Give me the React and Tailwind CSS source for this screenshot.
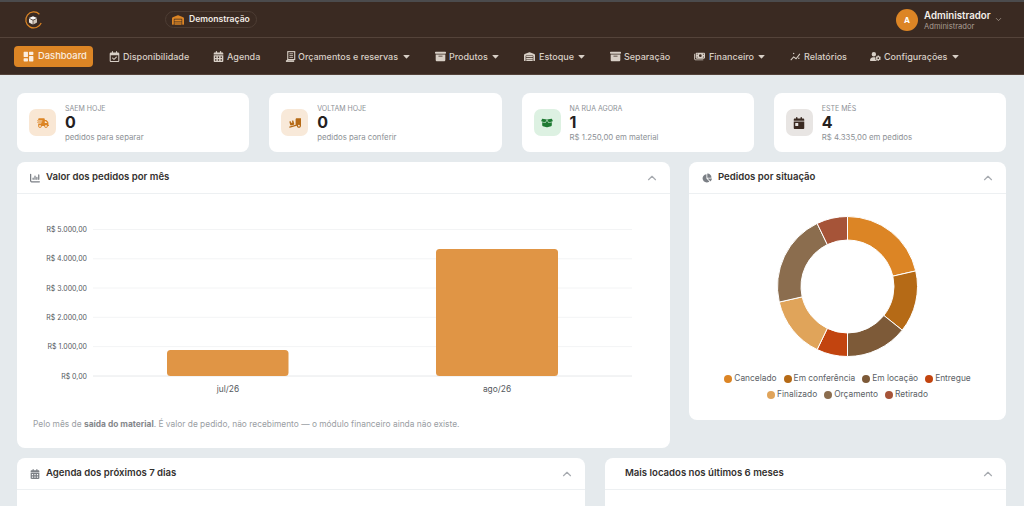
import React from 'react';
import { PiCaretDownFill } from 'react-icons/pi';
import { RiDashboardFill } from 'react-icons/ri';
import { FaRegCalendarCheck, FaCalendarDays, FaBoxArchive, FaMoneyBills, FaUserGear, FaTruckFast, FaTruckRampBox, FaBoxOpen, FaCalendarDay, FaWarehouse, FaChartPie, FaChartColumn } from 'react-icons/fa6';
import { LuChevronUp, LuChevronDown } from 'react-icons/lu';

const BudgetIcon = ({ size }) => (
    <svg width={size} height={size} viewBox="0 0 12 12" fill="none" stroke="currentColor">
        <rect x="3" y="0.7" width="7.6" height="8.6" strokeWidth="1.2" />
        <path d="M4.8 3h4M4.8 5h4M4.8 7h4" strokeWidth="0.9" />
        <path d="M1 11h9" strokeWidth="1.8" />
        <path d="M2.6 9.5V11" strokeWidth="1.2" />
    </svg>
);

const ReportIcon = ({ size }) => (
    <svg width={size} height={size} viewBox="0 0 12 12" fill="none" stroke="currentColor">
        <path d="M0.8 10 L4 6.4 L6.6 8.4 L10.8 3.2" strokeWidth="1.1" />
        <circle cx="4" cy="2.8" r="0.8" fill="currentColor" stroke="none" />
        <circle cx="9.6" cy="8" r="0.8" fill="currentColor" stroke="none" />
    </svg>
);

const navItems = [
    { label: 'Disponibilidade', icon: FaRegCalendarCheck, gap: 'ml-[3px]', w: 'w-[67px]', ml: 'ml-[15px]' },
    { label: 'Agenda', icon: FaCalendarDays, gap: 'ml-[3px]', w: 'w-[35px]', ml: 'ml-[22px]' },
    { label: 'Orçamentos e reservas', icon: BudgetIcon, gap: 'ml-[2px]', w: 'w-[100px]', ml: 'ml-[22px]', caret: true },
    { label: 'Produtos', icon: FaBoxArchive, gap: 'ml-[3px]', w: 'w-[38px]', ml: 'ml-[23px]', caret: true },
    { label: 'Estoque', icon: FaWarehouse, gap: 'ml-[4px]', w: 'w-[34px]', ml: 'ml-[23px]', caret: true },
    { label: 'Separação', icon: FaBoxArchive, gap: 'ml-[3px]', w: 'w-[47px]', ml: 'ml-[23px]' },
    { label: 'Financeiro', icon: FaMoneyBills, gap: 'ml-[4px]', w: 'w-[44px]', ml: 'ml-[22px]', caret: true },
    { label: 'Relatórios', icon: ReportIcon, gap: 'ml-[3px]', w: 'w-[43px]', ml: 'ml-[23px]' },
    { label: 'Configurações', icon: FaUserGear, gap: 'ml-[3px]', w: 'w-[63px]', ml: 'ml-[22px]', caret: true },
];

const stats = [
    { label: 'SAEM HOJE', value: '0', sub: 'pedidos para separar', icon: FaTruckFast, box: 'bg-[#f9e7d4]', color: 'text-[#dc8525]' },
    { label: 'VOLTAM HOJE', value: '0', sub: 'pedidos para conferir', icon: FaTruckRampBox, box: 'bg-[#f8e9d9]', color: 'text-[#b56a16]' },
    { label: 'NA RUA AGORA', value: '1', sub: 'R$ 1.250,00 em material', icon: FaBoxOpen, box: 'bg-[#ddf1e2]', color: 'text-[#1f7a33]' },
    { label: 'ESTE MÊS', value: '4', sub: 'R$ 4.335,00 em pedidos', icon: FaCalendarDay, box: 'bg-[#e8e5e3]', color: 'text-[#3a2a22]' },
];

const donut = [
    { label: 'Cancelado', n: 3, color: '#dc8525', dot: 'bg-[#dc8525]' },
    { label: 'Em conferência', n: 2, color: '#b56a16', dot: 'bg-[#b56a16]' },
    { label: 'Em locação', n: 2, color: '#7d5a38', dot: 'bg-[#7d5a38]' },
    { label: 'Entregue', n: 1, color: '#c2440f', dot: 'bg-[#c2440f]' },
    { label: 'Finalizado', n: 2, color: '#e0a45a', dot: 'bg-[#e0a45a]' },
    { label: 'Orçamento', n: 3, color: '#8b6d4e', dot: 'bg-[#8b6d4e]' },
    { label: 'Retirado', n: 1, color: '#a65438', dot: 'bg-[#a65438]' },
];

const arcPath = (start, end) => {
    const c = 70.5, R = 70, r = 46.5;
    const pt = (rad, a) => {
        const t = (a / 14) * Math.PI * 2;
        return `${(c + rad * Math.sin(t)).toFixed(2)} ${(c - rad * Math.cos(t)).toFixed(2)}`;
    };
    const large = (end - start) / 14 > 0.5 ? 1 : 0;
    return `M${pt(R, start)} A${R} ${R} 0 ${large} 1 ${pt(R, end)} L${pt(r, end)} A${r} ${r} 0 ${large} 0 ${pt(r, start)} Z`;
};

const Logo = () => (
    <svg width="20" height="20" viewBox="0 0 20 20" className="ml-[23px]">
        <path d="M16.4 4.2 A8 8 0 1 0 18.2 13" fill="none" stroke="#dc8525" strokeWidth="1.2" />
        <path d="M10 6.2 L14 8 L10 9.8 L6 8 Z" fill="#ffffff" />
        <path d="M6 8.6 L9.7 10.4 L9.7 14.4 L6 12.6 Z" fill="#efe9e2" />
        <path d="M14 8.6 L10.3 10.4 L10.3 14.4 L14 12.6 Z" fill="#cfc5b9" />
    </svg>
);

const CardHeader = ({ icon: Icon, title }) => (
    <div className="flex h-[32px] shrink-0 items-center border-b border-[#edf0f2] pl-[13px] pr-[11px]">
        {Icon && <Icon className="mr-[6px] text-[#7b7f85]" size={10} />}
        <span className={`text-[9.6px] font-semibold text-[#33302e] ${Icon ? '' : 'pl-[7px]'}`}>{title}</span>
        <LuChevronUp className="ml-auto text-[#a7abb0]" size={14} />
    </div>
);

const yLabels = ['R$ 5.000,00', 'R$ 4.000,00', 'R$ 3.000,00', 'R$ 2.000,00', 'R$ 1.000,00', 'R$ 0,00'];
const yPos = [35.5, 64.8, 94, 123.3, 152.6, 182];

const BarChart = () => (
    <svg width="653" height="210" className="block" style={{ fontFamily: 'Inter, sans-serif' }}>
        {yLabels.map((label, i) => (
            <g key={label}>
                <line x1="76" x2="615" y1={yPos[i]} y2={yPos[i]} stroke={i === 5 ? '#e6e8ea' : '#f3f4f5'} />
                <text x="70" y={yPos[i] + 2.5} textAnchor="end" fontSize="7" fill="#55595e">{label}</text>
            </g>
        ))}
        <rect x="150" y="156" width="121.5" height="26" rx="3.5" fill="#e09545" />
        <rect x="419" y="55" width="122" height="127" rx="3.5" fill="#e09545" />
        <text x="211" y="198" textAnchor="middle" fontSize="8.4" fill="#55595e">jul/26</text>
        <text x="480" y="198" textAnchor="middle" fontSize="8.4" fill="#55595e">ago/26</text>
    </svg>
);

const Donut = () => {
    let acc = 0;
    return (
        <svg width="141" height="141" className="mx-auto block">
            {donut.map((s) => {
                const d = arcPath(acc, acc + s.n);
                acc += s.n;
                return <path key={s.label} d={d} fill={s.color} stroke="#ffffff" strokeWidth="1" />;
            })}
        </svg>
    );
};

const App = () => {
    return (
        <div className="h-screen overflow-hidden bg-[#e5eaed] font-['Inter',sans-serif]">
            <div className="h-[2px] bg-[#4b4b4d]" />
            <header className="flex h-[35px] items-center bg-[#3a2a22]">
                <Logo />
                <div className="ml-[122px] flex h-[17px] w-[92px] items-center gap-[5px] rounded-full border border-[#4d3d34] pl-[6px]">
                    <FaWarehouse className="text-[#dc8525]" size={12} />
                    <span className="whitespace-nowrap text-[8.6px] font-semibold text-[#f1ebe4]">Demonstração</span>
                </div>
                <div className="ml-auto mr-[21px] flex items-center">
                    <div className="flex size-[22px] items-center justify-center rounded-full bg-[#dc8525] text-[8px] font-bold text-white">A</div>
                    <div className="ml-[6px] w-[67px] pt-[2px] leading-none">
                        <div className="whitespace-nowrap text-[9.7px] font-semibold leading-[13px] text-[#f4efe9]">Administrador</div>
                        <div className="whitespace-nowrap text-[7.6px] leading-[10px] text-[#a99d92]">Administrador</div>
                    </div>
                    <LuChevronDown className="ml-[3px] text-[#a99d92]" size={9} />
                </div>
            </header>
            <nav className="flex h-[38px] items-center border-y border-[#54433a] bg-[#3a2a22] pl-[14px] pt-[1px]">
                <div className="flex h-[21px] w-[79px] items-center rounded-[4px] bg-[#dc8525] pl-[8px] text-[9.4px] font-medium text-[#fbeee0]">
                    <RiDashboardFill size={13} />
                    <span className="ml-[3px]">Dashboard</span>
                </div>
                {navItems.map((item) => (
                    <div key={item.label} className={`flex items-center text-[#d8cfc6] ${item.ml}`}>
                        <span className="flex w-[12px] justify-center"><item.icon size={11} /></span>
                        <span className={`whitespace-nowrap text-[9px] font-medium ${item.gap} ${item.w}`}>{item.label}</span>
                        {item.caret && <PiCaretDownFill className="ml-[4px]" size={9} />}
                    </div>
                ))}
            </nav>
            <main className="px-[17px] pt-[18px] pr-[18px]">
                <div className="grid grid-cols-4 gap-5">
                    {stats.map((s) => (
                        <div key={s.label} className="flex h-[59px] items-center rounded-lg bg-white pl-[12px]">
                            <div className={`flex size-[27px] items-center justify-center rounded-[7px] ${s.box} ${s.color}`}>
                                <s.icon size={12} />
                            </div>
                            <div className="ml-[9px] flex flex-col">
                                <span className="text-[7px] leading-[10px] text-[#8d9196]">{s.label}</span>
                                <span className="-mt-[1px] mb-[1px] text-[16px] font-bold leading-[18px] text-[#25211f]">{s.value}</span>
                                <span className="text-[7.8px] leading-[10px] text-[#8d9196]">{s.sub}</span>
                            </div>
                        </div>
                    ))}
                </div>
                <div className="mt-[10px] grid grid-cols-[653px_317px] items-start gap-[19px]">
                    <section className="h-[286px] rounded-lg bg-white">
                        <CardHeader icon={FaChartColumn} title="Valor dos pedidos por mês" />
                        <BarChart />
                        <p className="mt-[14px] pl-[16px] text-[8.4px] leading-[12px] text-[#9a9ea3]">
                            Pelo mês de <b className="font-bold text-[#85888c]">saída do material</b>. É valor de pedido, não recebimento — o módulo financeiro ainda não existe.
                        </p>
                    </section>
                    <section className="h-[258px] rounded-lg bg-white">
                        <CardHeader icon={FaChartPie} title="Pedidos por situação" />
                        <div className="pt-[22px]">
                            <Donut />
                        </div>
                        <div className="mx-auto mt-[16px] flex w-[262px] flex-wrap justify-center gap-x-[7px] gap-y-[5px]">
                            {donut.map((s) => (
                                <div key={s.label} className="flex h-[11px] items-center gap-[2px]">
                                    <span className={`size-[8px] rounded-full ${s.dot}`} />
                                    <span className="whitespace-nowrap text-[8.4px] text-[#5c5f66]">{s.label}</span>
                                </div>
                            ))}
                        </div>
                    </section>
                </div>
                <div className="mt-[10px] grid grid-cols-[568px_401px] gap-5">
                    <section className="h-[120px] rounded-lg bg-white">
                        <CardHeader icon={FaCalendarDays} title="Agenda dos próximos 7 dias" />
                    </section>
                    <section className="h-[120px] rounded-lg bg-white">
                        <CardHeader title="Mais locados nos últimos 6 meses" />
                    </section>
                </div>
            </main>
        </div>
    );
};

export default App;
